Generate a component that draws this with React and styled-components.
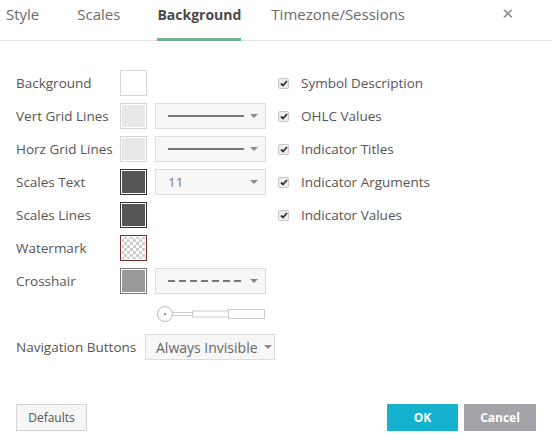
import React from "react";
import styled, { createGlobalStyle } from "styled-components";

const GlobalStyle = createGlobalStyle`
  html, body {
    margin: 0;
    padding: 0;
    background: #fff;
  }
  body {
    font-family: "Open Sans", "DejaVu Sans", sans-serif;
    font-size: 13.5px;
    color: #555;
  }
`;

const Dialog = styled.div`
  width: 552px;
  height: 445px;
  display: flex;
  flex-direction: column;
  background: #fff;
  box-sizing: border-box;
`;

const Header = styled.div`
  height: 40px;
  display: flex;
  align-items: stretch;
  border-bottom: 1px solid #e2e2e2;
  position: relative;
  padding-left: 6px;
`;

const Tab = styled.div`
  display: flex;
  align-items: center;
  padding: 0 0 10px;
  margin-right: ${(p) => p.gap}px;
  color: ${(p) => (p.active ? "#4a4a4a" : "#6b6b6b")};
  font-weight: ${(p) => (p.active ? 700 : 400)};
  font-size: ${(p) => (p.active ? 14 : 15)}px;
  border-bottom: 3px solid ${(p) => (p.active ? "#6db38f" : "transparent")};
  margin-bottom: -1px;
`;

const Close = styled.div`
  position: absolute;
  right: 38px;
  top: 3px;
  font-size: 15px;
  color: #8a8a8a;
`;

const Body = styled.div`
  flex: 1;
  display: flex;
  padding: 29px 0 0 16px;
`;

const LeftGrid = styled.div`
  display: grid;
  grid-template-columns: 104px 35px 111px;
  grid-auto-rows: 26px;
  row-gap: 7px;
  align-items: center;
`;

const Label = styled.div`
  grid-column: 1;
  color: #555;
  white-space: nowrap;
`;

const Swatch = styled.div`
  grid-column: 2;
  width: 27px;
  height: 26px;
  box-sizing: border-box;
  border: 1px solid ${(p) => p.border || "#d6d6d6"};
  box-shadow: inset 0 0 0 1px #fff;
  background: ${(p) => p.color};
  ${(p) =>
    p.checker &&
    `
    background-color: #fff;
    background-image:
      linear-gradient(45deg, #ccc 25%, transparent 25%, transparent 75%, #ccc 75%),
      linear-gradient(45deg, #ccc 25%, transparent 25%, transparent 75%, #ccc 75%);
    background-size: 6px 6px;
    background-position: 0 0, 3px 3px;
  `}
`;

const Select = styled.div`
  grid-column: 3;
  height: 26px;
  box-sizing: border-box;
  border: 1px solid #dcdcdc;
  background: #f7f7f7;
  display: flex;
  align-items: center;
  padding: 0 7px 0 12px;
  gap: 6px;
  color: #777;
`;

const Wide = styled(Select)`
  grid-column: 2 / span 2;
  width: 130px;
  margin-left: 25px;
  padding: 0 7px 0 10px;
  color: #666;
  font-size: 14px;
  white-space: nowrap;
`;

const Caret = styled.span`
  width: 0;
  height: 0;
  border-left: 4px solid transparent;
  border-right: 4px solid transparent;
  border-top: 4px solid #888;
  margin-left: auto;
`;

const Line = styled.div`
  flex: 1;
  height: 2px;
  background: ${(p) =>
    p.dashed
      ? "repeating-linear-gradient(90deg, #777 0 7px, transparent 7px 11px)"
      : "#777"};
`;

const SliderCell = styled.div`
  grid-column: 3;
  display: flex;
  align-items: center;
`;

const RightCol = styled.div`
  margin-left: 12px;
  display: flex;
  flex-direction: column;
  gap: 7px;
`;

const CheckRow = styled.label`
  height: 26px;
  display: flex;
  align-items: center;
  gap: 12px;
  color: #555;
`;

const Box = styled.span`
  width: 11px;
  height: 11px;
  box-sizing: border-box;
  border: 1px solid #c8c8c8;
  border-radius: 2px;
  background: #eee;
  display: flex;
  align-items: center;
  justify-content: center;
`;

const Footer = styled.div`
  display: flex;
  align-items: center;
  padding: 0 16px 14px;
  gap: 6px;
`;

const Button = styled.button`
  width: ${(p) => p.w || 72}px;
  height: 27px;
  border: ${(p) => (p.variant ? "none" : "1px solid #d4d4d4")};
  background: ${(p) =>
    p.variant === "ok" ? "#15b1cf" : p.variant === "cancel" ? "#a2a4a9" : "#f6f6f6"};
  color: ${(p) => (p.variant ? "#fff" : "#555")};
  font-family: inherit;
  font-size: 12px;
  font-weight: ${(p) => (p.variant ? 700 : 400)};
  padding: 0;
  &:first-child {
    margin-right: auto;
  }
`;

function Check() {
  return (
    <Box>
      <svg width="8" height="7" viewBox="0 0 8 7">
        <path d="M1 3.5 L3 5.5 L7 1" stroke="#333" strokeWidth="1.8" fill="none" />
      </svg>
    </Box>
  );
}

const checks = [
  "Symbol Description",
  "OHLC Values",
  "Indicator Titles",
  "Indicator Arguments",
  "Indicator Values",
];

export default function App() {
  return (
    <>
      <GlobalStyle />
      <Dialog>
        <Header>
          <Tab gap={38}>Style</Tab>
          <Tab gap={37}>Scales</Tab>
          <Tab gap={30} active>
            Background
          </Tab>
          <Tab>Timezone/Sessions</Tab>
          <Close>✕</Close>
        </Header>
        <Body>
          <LeftGrid>
            <Label>Background</Label>
            <Swatch color="#fff" />
            <span />

            <Label>Vert Grid Lines</Label>
            <Swatch color="#e8e8e8" />
            <Select>
              <Line />
              <Caret />
            </Select>

            <Label>Horz Grid Lines</Label>
            <Swatch color="#e8e8e8" />
            <Select>
              <Line />
              <Caret />
            </Select>

            <Label>Scales Text</Label>
            <Swatch color="#555" border="#333" />
            <Select>
              11
              <Caret />
            </Select>

            <Label>Scales Lines</Label>
            <Swatch color="#555" border="#333" />
            <span />

            <Label>Watermark</Label>
            <Swatch checker border="#7a2a2a" />
            <span />

            <Label>Crosshair</Label>
            <Swatch color="#999" border="#777" />
            <Select>
              <Line dashed />
              <Caret />
            </Select>

            <span />
            <span />
            <SliderCell>
              <svg width="111" height="18" viewBox="0 0 111 18">
                <circle cx="10" cy="9" r="7.5" fill="#fff" stroke="#bbb" />
                <circle cx="10" cy="9" r="1.3" fill="#999" />
                <rect x="17.5" y="7.5" width="20" height="3" fill="#fff" stroke="#ccc" />
                <rect x="37.5" y="6" width="36" height="6" fill="#fff" stroke="#ccc" />
                <rect x="73.5" y="4.5" width="36" height="9" fill="#fff" stroke="#ccc" />
              </svg>
            </SliderCell>

            <Label>Navigation Buttons</Label>
            <Wide>
              Always Invisible
              <Caret />
            </Wide>
          </LeftGrid>
          <RightCol>
            {checks.map((c) => (
              <CheckRow key={c}>
                <Check />
                {c}
              </CheckRow>
            ))}
          </RightCol>
        </Body>
        <Footer>
          <Button w={71}>Defaults</Button>
          <Button variant="ok" w={71}>
            OK
          </Button>
          <Button variant="cancel" w={72}>
            Cancel
          </Button>
        </Footer>
      </Dialog>
    </>
  );
}
